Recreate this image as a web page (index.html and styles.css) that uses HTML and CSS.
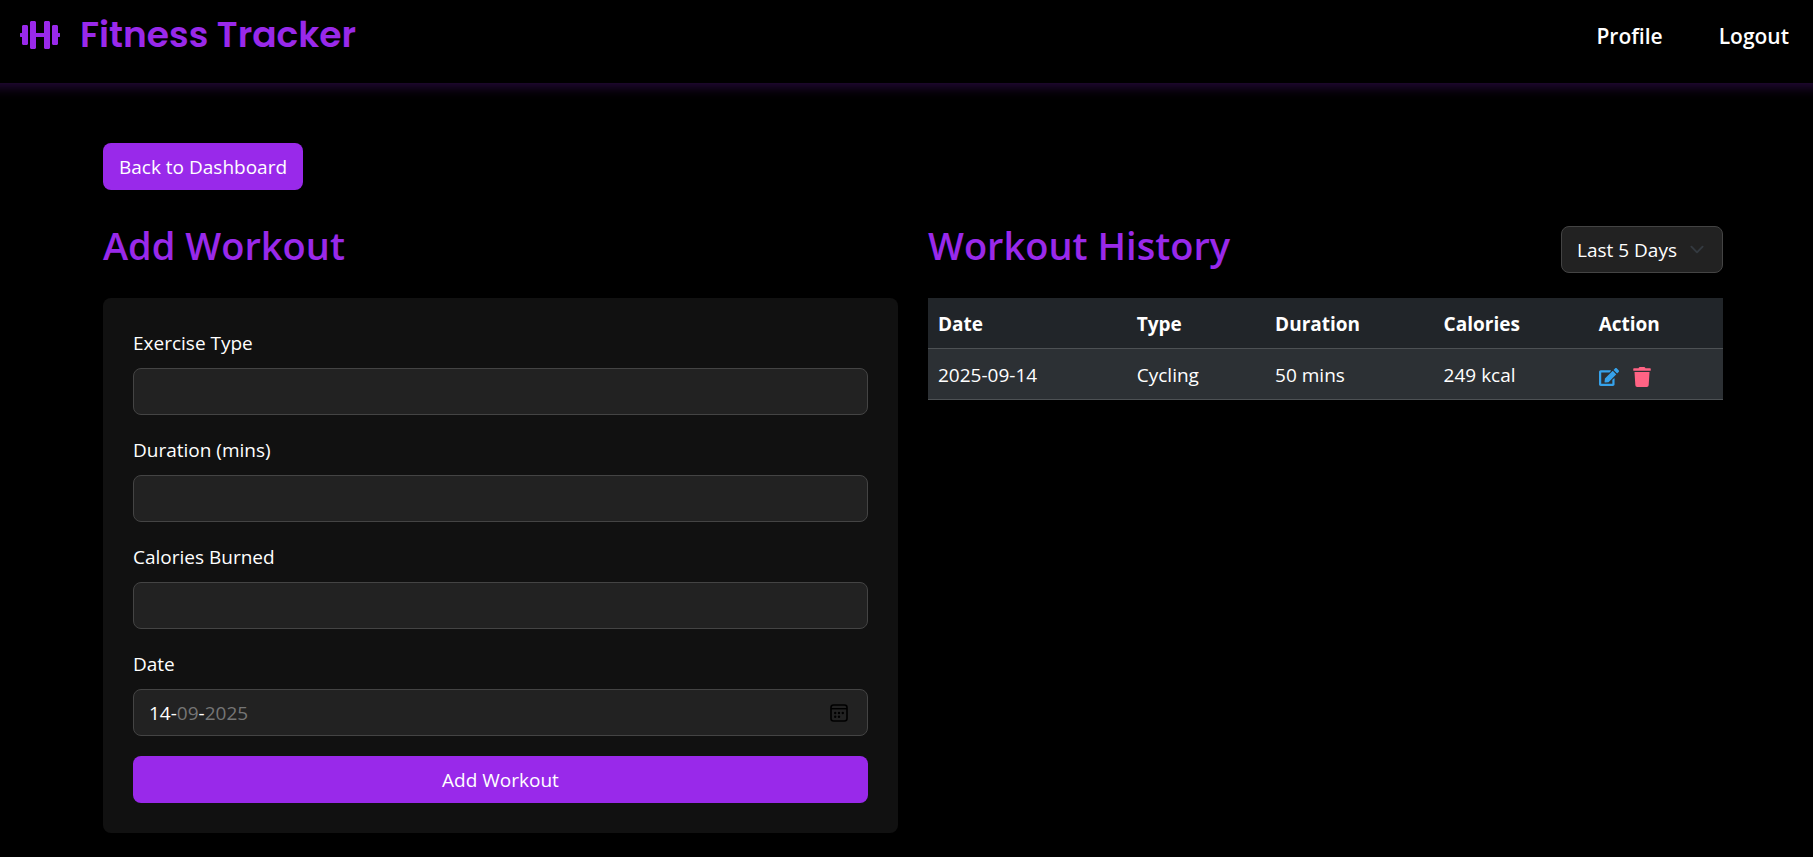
FILE: index.html
```html
<!DOCTYPE html>
<html lang="en">
<head>
<meta charset="utf-8">
<meta name="viewport" content="width=device-width, initial-scale=1">
<title>Fitness Tracker</title>
<link rel="stylesheet" href="styles.css">
</head>
<body>
<header class="navbar">
  <a class="brand" href="#">
    <svg class="brand-icon" viewBox="0 0 640 512" aria-hidden="true"><path fill="currentColor" d="M104 96H56c-13.3 0-24 10.7-24 24v104H8c-4.4 0-8 3.6-8 8v48c0 4.4 3.6 8 8 8h24v104c0 13.3 10.7 24 24 24h48c13.3 0 24-10.7 24-24V120c0-13.3-10.7-24-24-24zm528 128h-24V120c0-13.3-10.7-24-24-24h-48c-13.3 0-24 10.7-24 24v272c0 13.3 10.7 24 24 24h48c13.3 0 24-10.7 24-24V288h24c4.4 0 8-3.6 8-8v-48c0-4.4-3.6-8-8-8zM456 32h-48c-13.3 0-24 10.7-24 24v168H256V56c0-13.3-10.7-24-24-24h-48c-13.3 0-24 10.7-24 24v400c0 13.3 10.7 24 24 24h48c13.3 0 24-10.7 24-24V288h128v168c0 13.3 10.7 24 24 24h48c13.3 0 24-10.7 24-24V56c0-13.3-10.7-24-24-24z"/></svg>
    <span class="brand-name">Fitness Tracker</span>
  </a>
  <nav class="nav-links">
    <a href="#">Profile</a>
    <a href="#">Logout</a>
  </nav>
</header>
<main class="container">
  <button class="btn" type="button">Back to Dashboard</button>
  <div class="columns">
    <section>
      <div class="section-head"><h2>Add Workout</h2></div>
      <form class="card">
        <div class="field">
          <label for="type">Exercise Type</label>
          <input class="control" id="type" type="text">
        </div>
        <div class="field">
          <label for="duration">Duration (mins)</label>
          <input class="control" id="duration" type="text" inputmode="numeric">
        </div>
        <div class="field">
          <label for="calories">Calories Burned</label>
          <input class="control" id="calories" type="text" inputmode="numeric">
        </div>
        <div class="field">
          <label for="day">Date</label>
          <div class="control date-control">
            <input class="date-part date-day" id="day" type="text" value="14">
            <span>-</span>
            <input class="date-part" type="text" value="09" aria-label="Month">
            <span>-</span>
            <input class="date-part date-year" type="text" value="2025" aria-label="Year">
            <button class="icon-btn date-picker" type="button" aria-label="Open calendar">
              <svg viewBox="0 0 18 18" width="18" height="18"><rect x="1" y="1" width="16" height="16" rx="2.5" fill="none" stroke="currentColor" stroke-width="1.6"/><path d="M1 4.7h16" stroke="currentColor" stroke-width="1.4"/><g fill="currentColor"><circle cx="5.2" cy="9" r="1.2"/><circle cx="9" cy="9" r="1.2"/><circle cx="12.8" cy="9" r="1.2"/><circle cx="5.2" cy="12.8" r="1.2"/><circle cx="9" cy="12.8" r="1.2"/></g></svg>
            </button>
          </div>
        </div>
        <button class="btn" type="submit">Add Workout</button>
      </form>
    </section>
    <section>
      <div class="section-head">
        <h2>Workout History</h2>
        <select class="control range" aria-label="History range">
          <option>Last 5 Days</option>
          <option>Last 10 Days</option>
        </select>
      </div>
      <table class="history">
        <colgroup><col class="col-date"><col class="col-type"><col class="col-duration"><col class="col-calories"><col></colgroup>
        <thead>
          <tr><th>Date</th><th>Type</th><th>Duration</th><th>Calories</th><th>Action</th></tr>
        </thead>
        <tbody>
          <tr>
            <td>2025-09-14</td><td>Cycling</td><td>50 mins</td><td>249 kcal</td>
            <td>
              <div class="actions">
                <button class="icon-btn edit" type="button" aria-label="Edit"><svg viewBox="0 0 576 512" width="20" height="18"><path fill="currentColor" d="M402.6 83.2l90.2 90.2c3.8 3.8 3.8 10 0 13.8L274.4 405.6l-92.8 10.3c-12.4 1.4-22.9-9.1-21.5-21.5l10.3-92.8L388.8 83.2c3.8-3.8 10-3.8 13.8 0zm162-22.9l-48.8-48.8c-15.2-15.2-39.9-15.2-55.2 0l-35.4 35.4c-3.8 3.8-3.8 10 0 13.8l90.2 90.2c3.8 3.8 10 3.8 13.8 0l35.4-35.4c15.2-15.3 15.2-40 0-55.2zM384 346.2V448H64V128h229.8c3.2 0 6.2-1.3 8.5-3.5l40-40c7.6-7.6 2.2-20.5-8.5-20.5H48C21.5 64 0 85.5 0 112v352c0 26.5 21.5 48 48 48h352c26.5 0 48-21.5 48-48V306.2c0-10.7-12.9-16-20.5-8.5l-40 40c-2.2 2.3-3.5 5.3-3.5 8.5z"/></svg></button>
                <button class="icon-btn delete" type="button" aria-label="Delete"><svg viewBox="0 0 448 512" width="18" height="20"><path fill="currentColor" d="M432 32H312l-9.4-18.7A24 24 0 0 0 281.1 0H166.8a23.72 23.72 0 0 0-21.4 13.3L136 32H16A16 16 0 0 0 0 48v32a16 16 0 0 0 16 16h416a16 16 0 0 0 16-16V48a16 16 0 0 0-16-16zM53.2 467a48 48 0 0 0 47.9 45h245.8a48 48 0 0 0 47.9-45L416 128H32z"/></svg></button>
              </div>
            </td>
          </tr>
        </tbody>
      </table>
    </section>
  </div>
</main>
</body>
</html>
```
FILE: styles.css
```css
:root {
  --purple: #9929ea;
  --line: #444;
}

* {
  box-sizing: border-box;
}

body {
  margin: 0;
  background: #000;
  color: #fff;
  font: 19px/30px "Segoe UI", "Open Sans", sans-serif;
}

button,
input,
select {
  font: inherit;
}

.navbar {
  display: flex;
  justify-content: space-between;
  align-items: flex-start;
  padding: 15px 24px 28px 20px;
  box-shadow: 0 -8px 12px 12px rgba(153, 41, 234, 0.25);
}

.brand {
  display: flex;
  align-items: center;
  gap: 20px;
  color: var(--purple);
  text-decoration: none;
}

.brand-icon {
  width: 40px;
  height: 32px;
}

.brand-name {
  font: 600 36px/40px Poppins, Inter, sans-serif;
}

.nav-links {
  display: flex;
  gap: 56px;
  padding-top: 5px;
}

.nav-links a {
  color: #fff;
  font-size: 21px;
  font-weight: 600;
  line-height: 32px;
  text-decoration: none;
}

.container {
  max-width: 1663px;
  margin: 0 auto;
  padding: 60px 15px 24px 28px;
}

.btn {
  display: block;
  padding: 9px 16px 8px;
  border: 0;
  border-radius: 8px;
  background: var(--purple);
  color: #fff;
}

.columns {
  display: grid;
  grid-template-columns: repeat(2, minmax(0, 1fr));
  gap: 30px;
  margin-top: 30px;
}

.section-head {
  display: flex;
  justify-content: space-between;
  align-items: center;
  height: 58px;
  margin-bottom: 20px;
}

h2 {
  margin: 0 0 8px;
  color: var(--purple);
  font-size: 38px;
  font-weight: 600;
  line-height: 48px;
}

.card {
  display: grid;
  gap: 20px;
  padding: 30px;
  border-radius: 8px;
  background: #111;
}

.field {
  display: grid;
  gap: 10px;
}

.control {
  width: 100%;
  height: 47px;
  padding: 0 15px;
  border: 1px solid var(--line);
  border-radius: 8px;
  background: #222;
  color: #fff;
}

.date-control {
  display: flex;
  align-items: center;
}

.date-part {
  width: 2ch;
  padding: 0;
  border: 0;
  background: none;
  color: #757575;
}

.date-day {
  color: #fff;
}

.date-year {
  width: 4ch;
}

.date-picker {
  margin: 0 4px 0 auto;
  color: #000;
}

.icon-btn {
  display: flex;
  padding: 0;
  border: 0;
  background: none;
}

.range {
  width: 162px;
  padding-top: 2px;
  appearance: none;
  background: #222 url("data:image/svg+xml,%3csvg xmlns='http://www.w3.org/2000/svg' viewBox='0 0 16 16'%3e%3cpath fill='none' stroke='%23343a40' stroke-linecap='round' stroke-linejoin='round' stroke-width='2' d='m2 5 6 6 6-6'/%3e%3c/svg%3e") no-repeat right 15px center / 20px 15px;
}

.history {
  width: 100%;
  border-collapse: collapse;
  table-layout: fixed;
  background: #212529;
}

.col-date { width: 25%; }
.col-type { width: 17.4%; }
.col-duration { width: 21.2%; }
.col-calories { width: 19.5%; }

.history th,
.history td {
  padding: 11px 10px 9px;
  border-bottom: 1px solid #4d5154;
  text-align: left;
}

.history th {
  font-weight: 700;
}

.history tbody tr {
  background: #2c3034;
}

.actions {
  display: flex;
  align-items: center;
  gap: 14px;
  padding-top: 4px;
}

.edit { color: #36a2eb; }
.delete { color: #ff6384; }
```
